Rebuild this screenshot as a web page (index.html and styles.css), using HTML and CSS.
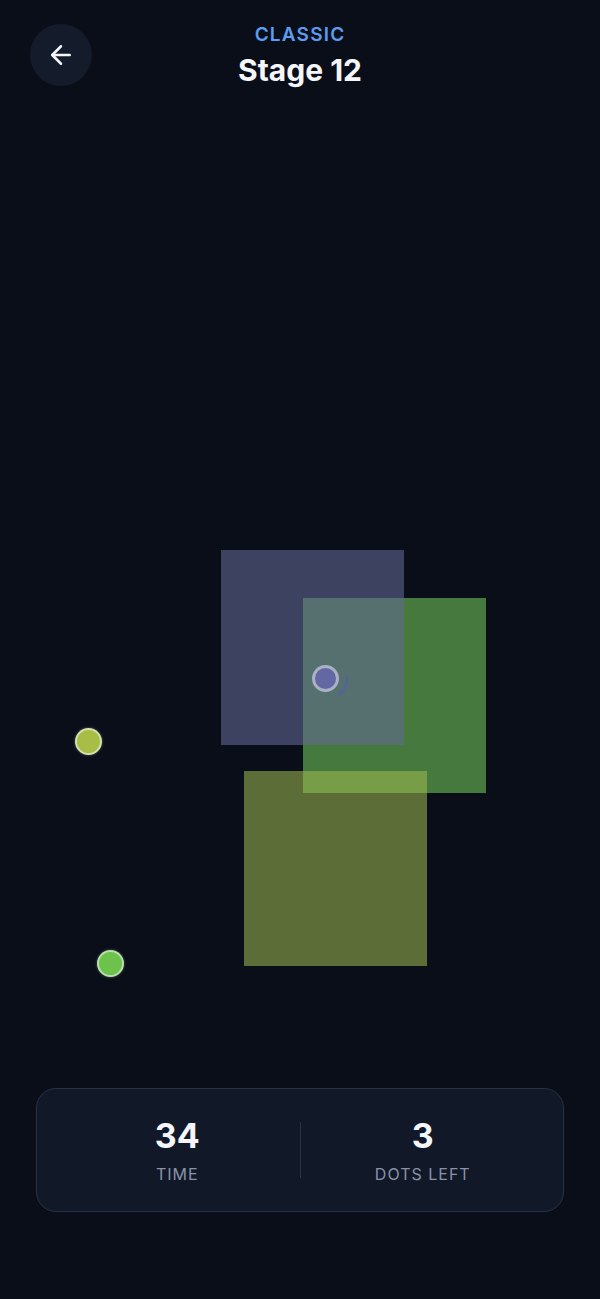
FILE: index.html
```html
<!DOCTYPE html>
<html lang="en">
<head>
<meta charset="utf-8">
<title>Stage 12</title>
<link rel="stylesheet" href="styles.css">
</head>
<body>
<div class="screen">
  <header class="header">
    <button class="back" aria-label="Back">
      <svg viewBox="0 0 24 24" width="30" height="30" fill="none" stroke="#f4f6fb" stroke-width="2" stroke-linecap="round" stroke-linejoin="round">
        <path d="M19 12H5"/>
        <path d="M12 5l-7 7 7 7"/>
      </svg>
    </button>
    <div class="title">
      <div class="mode">CLASSIC</div>
      <div class="stage">Stage 12</div>
    </div>
    <div class="spacer"></div>
  </header>

  <main class="arena">
    <div class="zone zone-green"></div>
    <div class="zone zone-olive"></div>
    <div class="zone zone-blue"></div>
    <svg class="ring" viewBox="0 0 60 60" width="60" height="60">
      <path d="M52 30 A22 22 0 0 1 44.5 46.5" fill="none" stroke="#5560a8" stroke-width="2.5" stroke-linecap="round" opacity="0.8"/>
    </svg>
    <div class="dot dot-purple"></div>
    <div class="dot dot-yellow"></div>
    <div class="dot dot-green"></div>
  </main>

  <section class="stats">
    <div class="stat">
      <div class="value">34</div>
      <div class="label">TIME</div>
    </div>
    <div class="divider"></div>
    <div class="stat">
      <div class="value">3</div>
      <div class="label">DOTS LEFT</div>
    </div>
  </section>
</div>
</body>
</html>
```

FILE: styles.css
```css
* { box-sizing: border-box; }
html, body {
  margin: 0;
  padding: 0;
  background: #0a0e19;
}
body {
  font-family: Inter, "Noto Sans", "Liberation Sans", sans-serif;
  color: #f4f6fb;
}
.screen {
  width: 600px;
  height: 1299px;
  display: flex;
  flex-direction: column;
  background: #0a0e19;
}
.header {
  height: 90px;
  padding: 24px 30px 0;
  display: grid;
  grid-template-columns: 62px 1fr 62px;
  align-items: start;
}
.back {
  width: 62px;
  height: 62px;
  border-radius: 50%;
  border: none;
  background: #141b2a;
  display: flex;
  align-items: center;
  justify-content: center;
  padding: 0;
}
.title {
  display: flex;
  flex-direction: column;
  align-items: center;
}
.mode {
  font-size: 19px;
  line-height: 22px;
  font-weight: 600;
  letter-spacing: 1.2px;
  color: #5d9cf0;
}
.stage {
  margin-top: 7px;
  font-size: 30px;
  line-height: 34px;
  font-weight: 700;
  color: #f4f6fb;
}
.arena {
  position: relative;
  height: 998px;
}
.zone {
  position: absolute;
  width: 183px;
  height: 195px;
}
.zone-blue {
  left: 221px;
  top: 460px;
  background: rgba(96, 105, 146, 0.58);
}
.zone-green {
  left: 303px;
  top: 508px;
  background: rgba(118, 210, 91, 0.55);
}
.zone-olive {
  left: 244px;
  top: 681px;
  background: rgba(162, 188, 80, 0.55);
}
.ring {
  position: absolute;
  left: 295px;
  top: 558px;
}
.dot {
  position: absolute;
  width: 27px;
  height: 27px;
  border-radius: 50%;
}
.dot-purple {
  left: 311.5px;
  top: 574.5px;
  background: #6468a2;
  border: 3px solid #aab0c8;
}
.dot-yellow {
  left: 74.5px;
  top: 637.5px;
  background: #a8bd45;
  border: 2px solid rgba(230, 235, 210, 0.75);
  box-shadow: 0 0 3px rgba(230, 240, 200, 0.35);
}
.dot-green {
  left: 96.5px;
  top: 859.5px;
  background: #6cc24a;
  border: 2px solid rgba(220, 235, 215, 0.7);
  box-shadow: 0 0 3px rgba(220, 240, 210, 0.35);
}
.stats {
  margin: 0 36px;
  padding: 0 18px;
  height: 124px;
  border: 1.5px solid #283146;
  border-radius: 20px;
  background: #111827;
  display: flex;
  align-items: center;
}
.stat {
  flex: 1;
  display: flex;
  flex-direction: column;
  align-items: center;
}
.value {
  font-size: 34px;
  line-height: 40px;
  font-weight: 700;
  color: #f4f6fb;
}
.label {
  margin-top: 8px;
  font-size: 16px;
  line-height: 20px;
  letter-spacing: 1px;
  color: #8a92a8;
}
.divider {
  width: 1px;
  height: 56px;
  background: #283146;
}
```
